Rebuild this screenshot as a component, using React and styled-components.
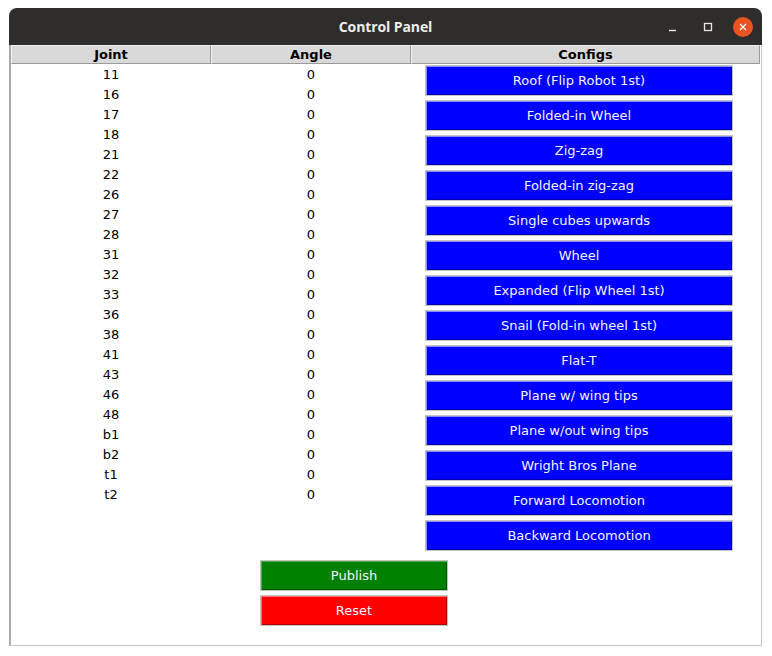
import React from "react";
import styled, { createGlobalStyle } from "styled-components";

const GlobalStyle = createGlobalStyle`
  html, body {
    margin: 0;
    padding: 0;
    background: #ffffff;
  }
  body {
    font-family: "DejaVu Sans", "Liberation Sans", sans-serif;
  }
`;

const Page = styled.div`
  width: 772px;
  height: 656px;
  padding: 8px 0 0 9px;
  box-sizing: border-box;
`;

const Window = styled.div`
  width: 753px;
  display: flex;
  flex-direction: column;
`;

const TitleBar = styled.div`
  height: 37px;
  background: #2f2c2c;
  border-radius: 8px 8px 0 0;
  display: flex;
  align-items: center;
  justify-content: center;
  position: relative;
  color: #eeeeec;
  font-family: "Open Sans", "DejaVu Sans", sans-serif;
  font-weight: 700;
  font-size: 14px;
  letter-spacing: -0.1px;
`;

const Controls = styled.div`
  position: absolute;
  right: 9px;
  top: 0;
  height: 100%;
  display: flex;
  align-items: center;
  gap: 15px;
`;

const CtrlBtn = styled.div`
  width: 20px;
  height: 20px;
  display: flex;
  align-items: center;
  justify-content: center;
  border-radius: 50%;
  background: ${({ $close }) => ($close ? "#e95420" : "transparent")};
`;

const Body = styled.div`
  height: 601px;
  box-sizing: border-box;
  border: 1px solid #c6c6c6;
  border-left: 2px solid #a9a9a9;
  border-top: none;
  background: #ffffff;
  display: flex;
  flex-direction: column;
  padding: 0 1px 0 0;
`;

const Header = styled.div`
  display: grid;
  grid-template-columns: 200px 200px 1fr;
  height: 19px;
`;

const HeadCell = styled.div`
  background: #d9d9d9;
  border: 1px solid #f2f2f2;
  border-right-color: #9a9a9a;
  border-bottom-color: #9a9a9a;
  box-sizing: border-box;
  display: flex;
  align-items: center;
  justify-content: center;
  font-weight: 700;
  font-size: 13px;
  color: #000;
`;

const Content = styled.div`
  display: flex;
`;

const JointTable = styled.div`
  display: grid;
  grid-template-columns: 200px 200px;
  grid-auto-rows: 20px;
  width: 400px;
`;

const Cell = styled.div`
  display: flex;
  align-items: center;
  justify-content: center;
  font-size: 13px;
  color: #000;
`;

const ConfigCol = styled.div`
  display: flex;
  flex-direction: column;
  gap: 4px;
  padding: 1px 0 0 14px;
`;

const ActionBtn = styled.button`
  width: ${({ $w }) => $w}px;
  height: 31px;
  box-sizing: border-box;
  border: 1px solid #c4c4c4;
  outline: none;
  padding: 0;
  background: ${({ $bg }) => $bg};
  box-shadow: inset 1px 1px 0 ${({ $hi }) => $hi},
    inset -1px -1px 0 ${({ $lo }) => $lo};
  color: #f4f4ff;
  font-family: "DejaVu Sans", "Liberation Sans", sans-serif;
  font-size: 13px;
  display: flex;
  align-items: center;
  justify-content: center;
`;

const Footer = styled.div`
  display: flex;
  flex-direction: column;
  gap: 4px;
  padding: 9px 0 0 249px;
`;

const joints = [
  "11", "16", "17", "18", "21", "22", "26", "27", "28", "31", "32",
  "33", "36", "38", "41", "43", "46", "48", "b1", "b2", "t1", "t2",
];

const configs = [
  "Roof (Flip Robot 1st)",
  "Folded-in Wheel",
  "Zig-zag",
  "Folded-in zig-zag",
  "Single cubes upwards",
  "Wheel",
  "Expanded (Flip Wheel 1st)",
  "Snail (Fold-in wheel 1st)",
  "Flat-T",
  "Plane w/ wing tips",
  "Plane w/out wing tips",
  "Wright Bros Plane",
  "Forward Locomotion",
  "Backward Locomotion",
];

const App = () => (
  <Page>
    <GlobalStyle />
    <Window>
      <TitleBar>
        Control Panel
        <Controls>
          <CtrlBtn>
            <svg width="10" height="10" viewBox="0 0 10 10">
              <line x1="1" y1="8.5" x2="8" y2="8.5" stroke="#e8e8e8" strokeWidth="1.4" />
            </svg>
          </CtrlBtn>
          <CtrlBtn>
            <svg width="10" height="10" viewBox="0 0 10 10">
              <rect x="1.5" y="1.5" width="7" height="7" fill="none" stroke="#e8e8e8" strokeWidth="1.3" />
            </svg>
          </CtrlBtn>
          <CtrlBtn $close>
            <svg width="10" height="10" viewBox="0 0 10 10">
              <path d="M2 2 L8 8 M8 2 L2 8" stroke="#ffffff" strokeWidth="1.2" />
            </svg>
          </CtrlBtn>
        </Controls>
      </TitleBar>
      <Body>
        <Header>
          <HeadCell>Joint</HeadCell>
          <HeadCell>Angle</HeadCell>
          <HeadCell>Configs</HeadCell>
        </Header>
        <Content>
          <JointTable>
            {joints.map((j) => (
              <React.Fragment key={j}>
                <Cell>{j}</Cell>
                <Cell>0</Cell>
              </React.Fragment>
            ))}
          </JointTable>
          <ConfigCol>
            {configs.map((c) => (
              <ActionBtn key={c} $w={308} $bg="#0000ff" $hi="#8a8aff" $lo="#0000b0">
                {c}
              </ActionBtn>
            ))}
          </ConfigCol>
        </Content>
        <Footer>
          <ActionBtn $w={188} $bg="#008000" $hi="#4ca64c" $lo="#005800">
            Publish
          </ActionBtn>
          <ActionBtn $w={188} $bg="#ff0000" $hi="#ff7070" $lo="#b00000">
            Reset
          </ActionBtn>
        </Footer>
      </Body>
    </Window>
  </Page>
);

export default App;
